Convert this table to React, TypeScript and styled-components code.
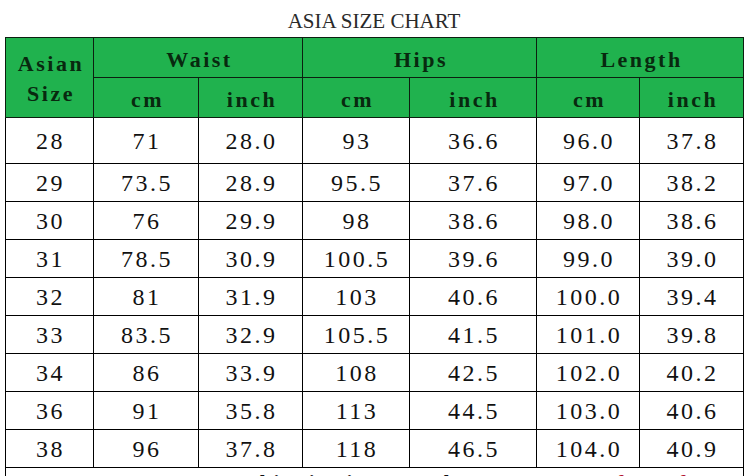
import React from 'react';
import styled, { createGlobalStyle } from 'styled-components';

const GlobalStyle = createGlobalStyle`
  html, body {
    margin: 0;
    padding: 0;
    background: #ffffff;
  }
  body {
    font-family: "Liberation Serif", serif;
  }
`;

const Page = styled.div`
  width: 749px;
  height: 476px;
  overflow: hidden;
  padding-left: 5px;
  box-sizing: border-box;
`;

const Title = styled.div`
  width: 738px;
  height: 37px;
  display: flex;
  align-items: center;
  justify-content: center;
  padding-top: 6px;
  box-sizing: border-box;
  font-family: "Liberation Serif", serif;
  font-size: 21px;
  color: #2a2a2a;
`;

const Table = styled.table`
  width: 738px;
  border-collapse: collapse;
  table-layout: fixed;
`;

const HeadCell = styled.th<{ $tall?: boolean }>`
  background: #20b24e;
  border: 1.5px solid #0c1f10;
  height: ${p => (p.$tall ? 80 : 40)}px;
  padding: ${p => (p.$tall ? '2px 0 0 3px' : '5px 0 0 3px')};
  box-sizing: border-box;
  font-family: "Liberation Serif", serif;
  font-size: 22px;
  font-weight: bold;
  letter-spacing: 2.5px;
  line-height: 30px;
  color: #08290f;
  text-align: center;
  vertical-align: middle;
`;

const Row = styled.tr<{ $first?: boolean }>`
  height: ${p => (p.$first ? 46 : 38)}px;
`;

const Cell = styled.td`
  border: 1.5px solid #000;
  padding: 2px 0 0 2px;
  font-family: "Liberation Serif", serif;
  font-size: 24px;
  letter-spacing: 2.5px;
  color: #111;
  text-align: center;
  vertical-align: middle;
`;

const NoteCell = styled.td`
  border: 1.5px solid #000;
  height: 34px;
  padding: 3px 0 0 4px;
  font-family: "Liberation Serif", serif;
  font-size: 21px;
  font-weight: bold;
  letter-spacing: 2px;
  color: #111;
  text-align: left;
  vertical-align: top;
  white-space: nowrap;
  overflow: hidden;
`;

const Red = styled.span`
  color: #b3122e;
`;

const widths = [88, 105, 104, 107, 127, 103, 104];

const rows: string[][] = [
  ['28', '71', '28.0', '93', '36.6', '96.0', '37.8'],
  ['29', '73.5', '28.9', '95.5', '37.6', '97.0', '38.2'],
  ['30', '76', '29.9', '98', '38.6', '98.0', '38.6'],
  ['31', '78.5', '30.9', '100.5', '39.6', '99.0', '39.0'],
  ['32', '81', '31.9', '103', '40.6', '100.0', '39.4'],
  ['33', '83.5', '32.9', '105.5', '41.5', '101.0', '39.8'],
  ['34', '86', '33.9', '108', '42.5', '102.0', '40.2'],
  ['36', '91', '35.8', '113', '44.5', '103.0', '40.6'],
  ['38', '96', '37.8', '118', '46.5', '104.0', '40.9'],
];

const App: React.FC = () => (
  <>
    <GlobalStyle />
    <Page>
      <Title>ASIA SIZE CHART</Title>
      <Table>
        <colgroup>
          {widths.map((w, i) => (
            <col key={i} style={{ width: w }} />
          ))}
        </colgroup>
        <thead>
          <tr>
            <HeadCell rowSpan={2} $tall>
              Asian
              <br />
              Size
            </HeadCell>
            <HeadCell colSpan={2}>Waist</HeadCell>
            <HeadCell colSpan={2}>Hips</HeadCell>
            <HeadCell colSpan={2}>Length</HeadCell>
          </tr>
          <tr>
            <HeadCell>cm</HeadCell>
            <HeadCell>inch</HeadCell>
            <HeadCell>cm</HeadCell>
            <HeadCell>inch</HeadCell>
            <HeadCell>cm</HeadCell>
            <HeadCell>inch</HeadCell>
          </tr>
        </thead>
        <tbody>
          {rows.map((r, i) => (
            <Row key={r[0]} $first={i === 0}>
              {r.map((v, j) => (
                <Cell key={j}>{v}</Cell>
              ))}
            </Row>
          ))}
          <tr>
            <NoteCell colSpan={7}>
              <Red>1. 2. 3. 2021 Summer </Red>
              This size is manual measurement,{' '}
              <Red>for reference</Red> only
            </NoteCell>
          </tr>
        </tbody>
      </Table>
    </Page>
  </>
);

export default App;
